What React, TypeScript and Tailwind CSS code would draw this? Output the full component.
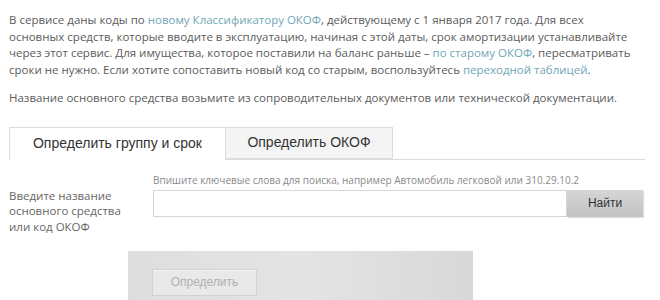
import type { FC } from "react";

const Link: FC<{ children: React.ReactNode }> = ({ children }) => (
	<a href="#" className="text-[#6fa6b6]">
		{children}
	</a>
);

const Intro = () => (
	<div className="whitespace-nowrap px-[9px] pt-[12px] font-['Open_Sans',sans-serif] text-[11.5px] leading-[16.5px] text-[#5b5b5b]">
		<p>
			В сервисе даны коды по <Link>новому Классификатору ОКОФ</Link>, действующему с 1 января 2017 года. Для всех
			<br />
			основных средств, которые вводите в эксплуатацию, начиная с этой даты, срок амортизации устанавливайте
			<br />
			через этот сервис. Для имущества, которое поставили на баланс раньше – <Link>по старому ОКОФ</Link>, пересматривать
			<br />
			сроки не нужно. Если хотите сопоставить новый код со старым, воспользуйтесь <Link>переходной таблицей</Link>.
		</p>
		<p className="mt-[12px]">
			Название основного средства возьмите из сопроводительных документов или технической документации.
		</p>
	</div>
);

const Tabs = () => (
	<div className="mx-[9px] mt-[20px] flex w-[636px] border-b border-[#dcdcdc] font-['Liberation_Sans',Arial,sans-serif] text-[14px] text-[#333]">
		<div className="-mb-px flex h-[33px] w-[217px] items-center justify-center border border-b-0 border-[#dcdcdc] bg-white">
			Определить группу и срок
		</div>
		<div className="flex h-[32px] w-[167px] items-center justify-center border-y border-r border-[#dcdcdc] bg-[#f4f4f4]">
			Определить ОКОФ
		</div>
	</div>
);

const Search = () => (
	<div className="mt-[13px] flex px-[9px] font-['Open_Sans',sans-serif]">
		<div className="w-[144px] pt-[15px] text-[11.5px] leading-[15.5px] text-[#666]">
			Введите название
			<br />
			основного средства
			<br />
			или код ОКОФ
		</div>
		<div className="flex flex-col">
			<div className="text-[10px] leading-[14px] text-[#8a8a8a]">
				Впишите ключевые слова для поиска, например Автомобиль легковой или 310.29.10.2
			</div>
			<div className="mt-[3px] flex">
				<input
					type="text"
					className="h-[27px] w-[414px] border border-[#d6d6d6] bg-white outline-none"
				/>
				<button
					type="button"
					className="h-[27px] w-[76px] bg-gradient-to-b from-[#d6d6d6] to-[#c2c2c2] font-['Liberation_Sans',Arial,sans-serif] text-[12px] text-[#333] shadow-[1px_1px_1px_#e0e0e0]"
				>
					Найти
				</button>
			</div>
		</div>
	</div>
);

const Panel = () => (
	<div className="ml-[128px] mt-[17px] h-[60px] w-[345px] bg-gradient-to-r from-[#dedede] via-[#e4e4e4] to-[#d8d8d8] pl-[24px] pt-[17px]">
		<button
			type="button"
			className="h-[27px] w-[105px] border border-[#d2d2d2] bg-[#e9e9e9] font-['Liberation_Sans',Arial,sans-serif] text-[12px] text-[#b0b0b0] shadow-[inset_0_1px_0_#f4f4f4]"
		>
			Определить
		</button>
	</div>
);

export default function App() {
	return (
		<div className="h-[300px] w-[660px] overflow-hidden bg-white">
			<Intro />
			<Tabs />
			<Search />
			<Panel />
		</div>
	);
}
